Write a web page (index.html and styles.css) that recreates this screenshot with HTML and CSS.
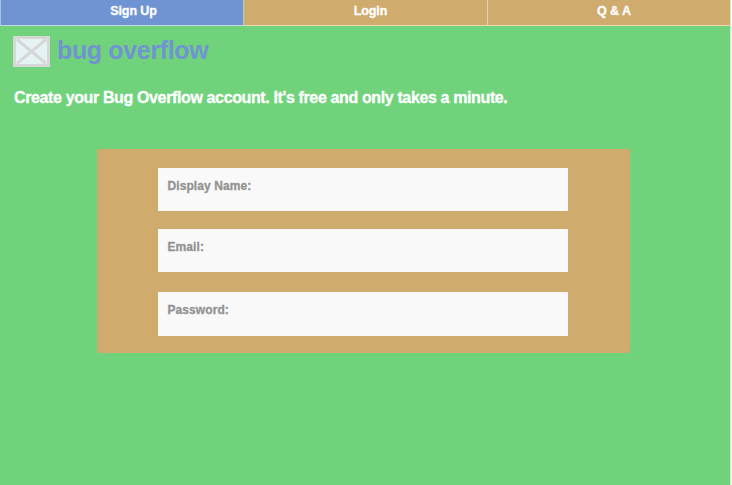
FILE: index.html
```
<!DOCTYPE html>
<html lang="en">
<head>
<meta charset="utf-8">
<title>Bug Overflow</title>
<link rel="stylesheet" href="styles.css">
</head>
<body>
<div class="page">
  <nav class="tabs">
    <a class="tab tab-active">Sign Up</a>
    <a class="tab">Login</a>
    <a class="tab">Q &amp; A</a>
  </nav>
  <header class="brand">
    <svg class="logo" viewBox="0 0 37 31" width="37" height="31">
      <rect x="1.5" y="1.5" width="34" height="28" fill="#e6f3f5" stroke="#d6d8d7" stroke-width="3"/>
      <path d="M4 3.500L33 27.500M33 3.500L4 27.500" stroke="#d6d8d7" stroke-width="3"/>
    </svg>
    <h1 class="brand-name">bug overflow</h1>
  </header>
  <p class="tagline">Create your Bug Overflow account. It's free and only takes a minute.</p>
  <form class="panel">
    <label class="field">Display Name:</label>
    <label class="field">Email:</label>
    <label class="field field-password">Password:</label>
  </form>
</div>
</body>
</html>
```
FILE: styles.css
```
* { box-sizing: border-box; }
body {
  margin: 0;
  background: #fff;
  font-family: "Liberation Sans", Arial, sans-serif;
  font-weight: bold;
  overflow: hidden;
}
.page {
  width: 731px;
  height: 485px;
  background: #70d37c;
  border-right: 1px solid #c9efcf;
}
.tabs {
  display: grid;
  grid-template-columns: 243px 244px 243px;
  height: 26px;
}
.tab {
  background: #cfab6d;
  border-left: 1px solid #e3d3a4;
  border-bottom: 1px solid #efd9b2;
  color: #fff;
  font-size: 12.5px;
  line-height: 23px;
  letter-spacing: -0.1px;
  text-align: center;
  -webkit-text-stroke: 0.3px #fff;
}
.tab-active {
  background: #7094d2;
  border-left-color: #a9bfe3;
  border-bottom-color: #c5d9e6;
  padding-left: 23px;
}
.tab:nth-child(2) {
  padding-left: 10px;
  border-left-color: #c9cf9a;
}
.tab:nth-child(3) { padding-left: 10px; }
.brand {
  display: flex;
  align-items: center;
  gap: 7px;
  height: 31px;
  margin: 10px 0 0 13px;
}
.brand-name {
  margin: 0;
  font-size: 25px;
  line-height: 29px;
  letter-spacing: -0.35px;
  color: #7094d2;
  position: relative;
  top: -1px;
}
.tagline {
  margin: 21px 0 0 14px;
  font-size: 16px;
  line-height: 20px;
  letter-spacing: -0.37px;
  color: #fff;
  white-space: nowrap;
  -webkit-text-stroke: 0.3px #fff;
}
.panel {
  width: 533px;
  height: 204px;
  margin: 41px 0 0 97px;
  padding: 19px 62px 0 61px;
  border-radius: 2px;
  background: #cfab6d;
}
.field {
  display: block;
  height: 43px;
  margin-bottom: 18px;
  padding-left: 9.500px;
  background: #f9f9f9;
  color: #929292;
  font-size: 12px;
  line-height: 36px;
  letter-spacing: 0.08px;
  -webkit-text-stroke: 0.3px #929292;
}
.field-password {
  height: 44px;
  margin-top: 20px;
}
```
